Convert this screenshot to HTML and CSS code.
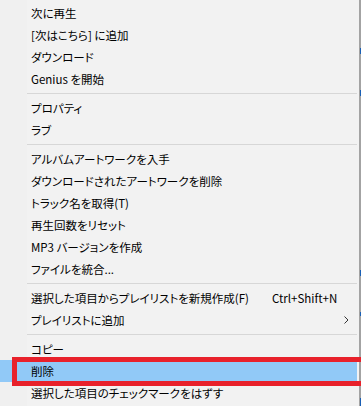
FILE: index.html
```html
<!DOCTYPE html>
<html>
<head>
	<meta charset="UTF-8">
	<title>コンテキストメニュー</title>
	<link rel="stylesheet" href="styles.css">
</head>
<body>

	<div class="menu">
		<div class="item">次に再生</div>
		<div class="item">[次はこちら] に追加</div>
		<div class="item">ダウンロード</div>
		<div class="item">Genius を開始</div>
		<div class="sep"></div>
		<div class="item">プロパティ</div>
		<div class="item">ラブ</div>
		<div class="sep"></div>
		<div class="item">アルバムアートワークを入手</div>
		<div class="item">ダウンロードされたアートワークを削除</div>
		<div class="item">トラック名を取得(T)</div>
		<div class="item">再生回数をリセット</div>
		<div class="item">MP3 バージョンを作成</div>
		<div class="item">ファイルを統合...</div>
		<div class="sep"></div>
		<div class="item">
			<span class="label">選択した項目からプレイリストを新規作成(F)</span>
			<span class="key">Ctrl+Shift+N</span>
		</div>
		<div class="item">
			<span class="label">プレイリストに追加</span>
			<span class="sub">
				<svg width="5" height="8" viewBox="0 0 5 8"><polyline points="0.5,0.5 4,4 0.5,7.5" fill="none" stroke="#333" stroke-width="1"/></svg>
			</span>
		</div>
		<div class="sep"></div>
		<div class="item">コピー</div>
		<div class="item on">削除</div>
		<div class="item">選択した項目のチェックマークをはずす</div>
	</div>

	<!-- red annotation box around the highlighted item -->
	<div class="mark"></div>

	<!-- bits of the window behind the menu -->
	<span class="peek" style="top: 48px; height: 6px;"></span>
	<span class="peek" style="top: 90px; height: 6px;"></span>
	<span class="peek" style="top: 270px; height: 6px;"></span>
	<span class="peek" style="top: 312px; height: 4px;"></span>
	<span class="peek" style="top: 398px; height: 8px;"></span>

</body>
</html>
```
FILE: styles.css
```css
* {
	margin: 0;
	padding: 0;
	box-sizing: border-box;
}
body {
	width: 361px;
	height: 406px;
	overflow: hidden;
	position: relative;
	background: #f0f0f0;
	font-family: "Noto Sans CJK JP", sans-serif;
	font-size: 11.5px;
	font-feature-settings: "palt";
	color: #000;
}
.menu {
	width: 361px;
	height: 406px;
	padding-top: 2px;
	padding-right: 2px;
	border-right: 2px solid #a3a3a3;
	background: linear-gradient(to right, #f0f0f0 27px, #f2f2f2 27px);
	display: flex;
	flex-direction: column;
}
.item {
	height: 22px;
	flex: none;
	display: flex;
	align-items: center;
	padding-left: 31px;
	white-space: nowrap;
}
.item.on {
	background: #91c9f7;
}
.label {
	flex: 1;
}
.key {
	width: 85px;
}
.sub {
	width: 13px;
	display: flex;
	align-items: center;
}
.sep {
	flex: none;
	height: 1px;
	margin: 3px 0 3px 27px;
	background: #d7d7d7;
}
.mark {
	position: absolute;
	left: 12px;
	top: 357px;
	right: 0;
	height: 29px;
	border: 5px solid #e8212b;
	border-right: 0;
}
.peek {
	position: absolute;
	right: 0;
	width: 1px;
	background: #1a5fb4;
}
```
